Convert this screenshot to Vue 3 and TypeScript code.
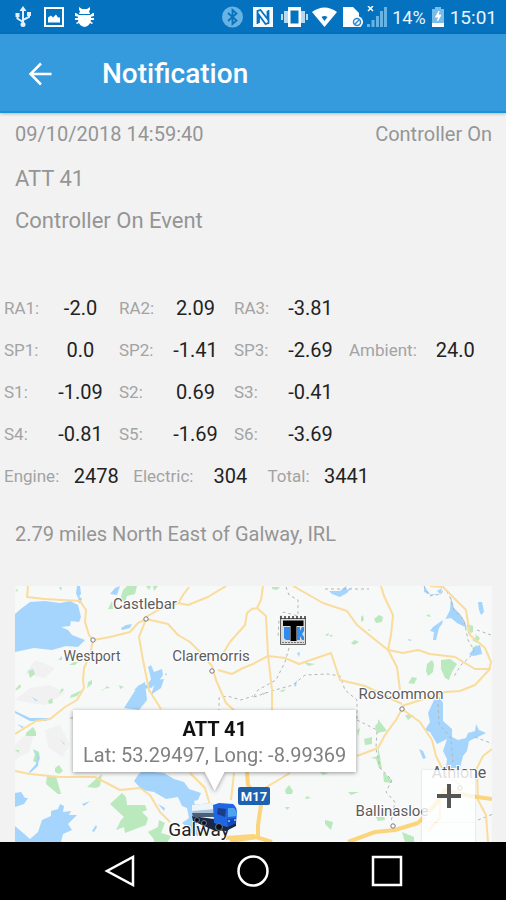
<script setup lang="ts">
interface Reading {
  label: string
  value: string
}

interface Place {
  name: string
  x: number
  y: number
  size: number
  dot: [number, number]
}

const readings: Reading[][] = [
  [
    { label: 'RA1:', value: '-2.0' },
    { label: 'RA2:', value: '2.09' },
    { label: 'RA3:', value: '-3.81' },
  ],
  [
    { label: 'SP1:', value: '0.0' },
    { label: 'SP2:', value: '-1.41' },
    { label: 'SP3:', value: '-2.69' },
    { label: 'Ambient:', value: '24.0' },
  ],
  [
    { label: 'S1:', value: '-1.09' },
    { label: 'S2:', value: '0.69' },
    { label: 'S3:', value: '-0.41' },
  ],
  [
    { label: 'S4:', value: '-0.81' },
    { label: 'S5:', value: '-1.69' },
    { label: 'S6:', value: '-3.69' },
  ],
]

const hours: Reading[] = [
  { label: 'Engine:', value: '2478' },
  { label: 'Electric:', value: '304' },
  { label: 'Total:', value: '3441' },
]

const places: Place[] = [
  { name: 'Castlebar', x: 145, y: 609, size: 15, dot: [146, 619] },
  { name: 'Westport', x: 92, y: 661, size: 14, dot: [93, 640] },
  { name: 'Claremorris', x: 211, y: 661, size: 15, dot: [212, 671] },
  { name: 'Roscommon', x: 401, y: 699, size: 15, dot: [402, 709] },
  { name: 'Athlone', x: 459, y: 778, size: 16, dot: [460, 788] },
  { name: 'Ballinasloe', x: 392, y: 816, size: 15, dot: [393, 826] },
]

const water: string[] = [
  'M15 614L22 608 30 602 45 601 60 603 70 601 78 605 81 617 79 622 71 621 70 626 61 627 68 630 72 635 85 640 78 647 66 646 52 650 34 648 15 652Z',
  'M77 586h3l1 8-3 4-2-5zM79 596l3 3-2 5-2-3z',
  'M110 594l5-6 5-2-3 9zM121 628l5-3 6-1-2 4-8 2z',
  'M134 690l5-5 8 0 4-6-3-12 3-2 3 7 8-3 1 6-5 7-7 6zM165 674l2-1-1 3z',
  'M124 708L138 686 145 682 147 700 139 710zM152 692l4-12 8-1-3 9-9 6z',
  'M15 711l15 7 20 0-4 3-16 0-15-8zM17 724l7 3-2 1zM31 696l7 5-2 0z',
  'M34 749l5 7-1 10-8 7-1-1 7-8 1-8z',
  'M15 793l6-1 4 6 3 0-4 6-9 3z',
  'M15 826l15 13 8-7 4-12 9-4 0-5 7-2 2-5 4 2-1 6 8-1-2 4 8 0-9 9 4 6-9 4-2 8H15z',
  'M82 804l8-3-6 5zM92 831l4-6 1 2-3 5z',
  'M138 775l4-4 22 2 10 6 10 3 5 7 12 4-3 7-4 1 2 9-3 9 8 10-3 7-8-3-3-6-5-4 7-5-2-10-5-2-4-9-12 2-12-7-12-2-8-9z',
  'M158 804l7 4-1 3z',
  'M329 591l11 0 6-5 1 4 5-3-5 6-7 4-8-3z',
  'M424 586l6 8 11 1-4-4 5-3-2 7-8 0-8-3z',
  'M446 618l4-8 1-13 3 11 6 6 4 6 3 8-10-5-6-5-6 1zM478 602l4 0 2 10-3 3-2-5z',
  'M433 627l10-7-1 4-3 4-3 12-3 0 1-8-4-1zM408 639l4 1-3 1z',
  'M473 648l7-3 2 9-9 2-4-2 4-4z',
  'M434 700l5-4 4 7 0 18 9 8 0 8 6 3 8-2 2-5 7-2 1-7 3 6 7 3-4 2-13 6-2 10-4 5-3 12h-14l1-9-4-8 4-12-10 5-7-12-5-2 5-8-2-9z',
  'M419 749l4 2 3 7-3 1zM294 685l3-5-1 7zM297 653l3-1-1 5z',
]

const greens: string[] = [
  'M120 600l3-10 4-4h10l-2 8-8 2-2 6zM108 609l4-8 1 8zM146 586h5l-2 4zM153 586h5l-4 5zM59 587l3 0-1 4z',
  'M15 590l3-1-1 3zM28 671l5-2 2 5-5 4zM69 665l5-3 4 0-3 3zM88 682l4-2 0 4-5 4zM58 660l4-4 0 4zM15 690l5-6 1 3-4 3z',
  'M71 695l11-5-5 6-7 2zM48 701l4-3 1 5-4 1zM62 688l2 2-5 4zM102 691l5-5 3 2-7 1zM119 685l5 2-4 2z',
  'M26 733l7-6 3 5 0 4-10 0zM60 739l5 5-1 1zM15 750l4 0 0 3zM33 749l6 3 1 7-3 4-4-2 2-6z',
  'M55 768l4-3 4 6-4 3-4-2zM47 776l9 0 5 18-3 0-12-10zM96 779l6-5-2 12-4 2-9-1z',
  'M110 804l12-11 4 4 1 8 18 0 2 5-5 2 6 6-2 7-8 3-13 5-1-6-8 3 5-10 3-3z',
  'M148 832l10-5 1-7 6 3-4 10 10 3-4 7h-12l-2-5z',
  'M272 587l8 0-3 3-5-1zM361 617l2-2 1 5-3 2zM374 619l5-4 4 2-1 5-6 1zM325 635l4-2-1 3zM329 635l4 0-2 2zM351 643l4-3 4 2-5 3zM368 629l3 1-2 1zM426 616l3-2 2 3z',
  'M427 664l5-4 2 4-1 8-5 4-2-5zM441 660l9-1 7 5-5 8-3 8-4-2-4-9zM409 682l3-5 5 1-3 6-6-1zM467 624l6 2 0 6-5 2zM475 634l5 4-3 5-5-3 4-3zM472 648l5-3 4 7-5 4z',
  'M303 662l12 2-6 2zM279 691l7-2-3 3zM262 693l6-1-5 3z',
  'M378 719l3 4 6 8-10 2-2-7 3-3zM364 739l8-2 0 7-7 1zM371 758l7-2 0-9 2 9 2 14-3-2-3-9zM383 772l9 8 0 3-8-1zM405 715l9 0-6 5zM357 730l3-2-2 9z',
  'M285 790l4-5 4 6-1 3-6 0zM305 798l2-2 4 2-5 1zM285 807l5 0-3 3zM325 820l8 2-2 8-6-6zM348 792l11 0-8 3zM320 772l9 1-6 2z',
  'M402 832l12 5 0 5h-9zM376 817l8-2 1 5-7 1z',
]

const roads: string[] = [
  'M28 586L27 597 45 599 80 601 86 610 85 622 89 635 93 640 90 655 84 668 83 680 84 688 77 700 65 707 50 719 36 721 15 734',
  'M93 640L110 637 130 632 138 623 146 619 168 624 178 635 190 642 200 652 212 666 216 680 226 703 236 712',
  'M146 619L139 637 143 660 149 690 161 709',
  'M146 617L160 609 178 603 188 605 208 597 226 586M179 602L183 595 189 587',
  'M253 608L247 613 245 625 230 642 219 660M218 670L232 674 243 668 253 664 268 656 285 658 299 664 331 653 340 680 365 686 402 704',
  'M263 586L261 600 257 608 253 609M257 608L266 616 268 655 272 690 272 710',
  'M293 586L323 603 347 611 357 625 368 634 388 650 403 653 418 650 430 654 455 657 475 669 491 669',
  'M381 586L384 596 393 615 391 635 388 650 397 667 400 690',
  'M430 586L443 587 466 610 470 635 485 648 491 662 489 670 475 685 460 691 445 692 430 697 402 706',
  'M402 709L396 720 385 735 378 748 357 756M290 773L265 788',
  'M402 709L420 722 432 740 436 756 444 772 460 785M492 749L483 756 477 768 478 800 486 815 488 842',
  'M234 773L231 800M190 773L205 788 210 805M15 771L30 774 60 777 95 777 120 790 140 788 150 795 160 812 170 822',
  'M428 831L440 818 440 800',
]

const motorways: string[] = [
  'M348 842L375 832 395 830 418 823 435 805 445 790 470 796 492 799',
  'M247 772L248 785 261 805 258 825 258 838M226 838L253 836 272 842M230 841L258 837',
]

const borders: string[] = [
  'M286 587L289 595 298 600 298 616 283 612 279 620 278 638 M289 648L285 662 276 680 258 690 253 698',
  'M254 697L275 690 293 685 305 675 328 674 340 676 345 690 357 700 357 720',
  'M325 589h44M424 586l5 10 12-2 3-7 6 10 4 13 10 10 4 20 6 10-4 7-9 8-8 13M477 630l14 5',
  'M357 720l20 10-1 18 4 20 12 12-6 12 9 10-4 20M438 704l1 20 12 14 2 26 M475 737l18 7M478 820l15-6M70 718h18M219 712v-14l8-2 14 4 12-4',
]
</script>

<template>
  <div class="screen">
    <div class="status">
      <div class="status-group left">
        <svg width="18" height="22" viewBox="0 0 18 22" fill="none" stroke="#dff0ff" stroke-width="2">
          <path d="M8 3v16M8 16L2.500 12.500V8M8 14l6-3V7" />
          <path d="M8 0L4.500 5h7zM0.500 7h4v4h-4zM12 6h4v4h-4z" fill="#dff0ff" stroke="none" />
          <circle cx="8" cy="18.500" r="2.500" fill="#dff0ff" stroke="none" />
        </svg>
        <svg width="20" height="20" viewBox="0 0 20 20">
          <path d="M0 0h20v20H0zM2 2v16h16V2z" fill="#fff" fill-rule="evenodd" />
          <path d="M4 15.500V10.500l3-2 2 2 3-3 2 3h2v5z" fill="#fff" />
        </svg>
        <svg width="19" height="20" viewBox="0 0 19 20" fill="#fff">
          <path d="M4 0l3 2h5l3-2v3l-1 1 1 3H4l1-3-1-1z" />
          <path d="M3 8h13v5q-1 6-6.500 7Q4 19 3 13z" />
          <path d="M0 6h1l3 2v2l-4-1zM19 6h-1l-3 2v2l4-1zM0 11h4v2H0zM15 11h4v2h-4zM1 16l3-2v2l-2 1zM18 16l-3-2v2l2 1z" />
        </svg>
      </div>
      <div class="status-group right">
        <svg width="24" height="22" viewBox="0 0 24 22">
          <circle cx="10.500" cy="11" r="10.500" fill="#67b3e3" />
          <path d="M6 7l8.500 7.500-4 3.500V4l4 3.500L6 15" fill="none" stroke="#0872bd" stroke-width="1.800" />
        </svg>
        <svg width="27" height="20" viewBox="0 0 27 20">
          <path d="M3 0h20v20H3z" fill="#f5faff" />
          <path d="M7.500 17V4l3-1 7 9V4M18.500 3v13l-3 1-6.500-9v8" fill="none" stroke="#0872bd" stroke-width="1.800" />
        </svg>
        <svg width="27" height="20" viewBox="0 0 27 20">
          <path d="M7 0h13v20H7zM9.500 3.500v13h8v-13z" fill="#fff" fill-rule="evenodd" />
          <path d="M3 4h4v12H3zM20 4h4v12h-4z" fill="#b5d9f3" />
          <path d="M0 7h2v6H0zM25 7h2v6h-2z" fill="#b5d9f3" />
        </svg>
        <svg width="27" height="20" viewBox="0 0 27 20">
          <path d="M0 5Q12.500-4 25 5L12.500 20z" fill="#fff" />
          <path d="M9.500 10q3-2 6 0l-3 4z" fill="#0872bd" />
        </svg>
        <svg width="20" height="20" viewBox="0 0 20 20">
          <path d="M0 0h10l6 6v14H0z" fill="#fff" />
          <circle cx="14" cy="15" r="6" fill="#fff" />
          <circle cx="14" cy="15" r="3.500" fill="none" stroke="#2d87cc" stroke-width="1.500" />
          <path d="M11.500 17.500l5-5" stroke="#2d87cc" stroke-width="1.500" />
        </svg>
        <svg width="21" height="22" viewBox="0 0 21 22">
          <path d="M1 0l5 5M6 0L1 5" stroke="#fff" stroke-width="1.500" />
          <path d="M0 18h3v3H0zM4.500 14h3v7h-3zM9 10h3v11H9zM13 5h3v16h-3zM17 1h3v20h-3z" fill="#67b3e3" />
        </svg>
        <span class="battery-text">14%</span>
        <svg width="16" height="20" viewBox="0 0 16 20">
          <path d="M5 0h6v2h3v16H2V2h3z" fill="#79bce8" />
          <path d="M2 16h12v4H2z" fill="#fff" />
          <path d="M9 4l-3.500 6h3l-1 4 3.500-6H8z" fill="#fff" stroke="#fff" />
        </svg>
        <span class="clock">15:01</span>
      </div>
    </div>

    <header class="appbar">
      <button class="back" type="button" aria-label="Back">
        <svg width="24" height="24" viewBox="0 0 24 24" fill="none" stroke="#fff" stroke-width="2.500">
          <path d="M23.500 12H2.500M13 1.500L2.500 12 13 22.500" />
        </svg>
      </button>
      <h1>Notification</h1>
    </header>

    <main>
      <div class="summary">
        <div class="summary-top">
          <span>09/10/2018 14:59:40</span>
          <span>Controller On</span>
        </div>
        <p class="large">ATT 41</p>
        <p class="large">Controller On Event</p>
      </div>

      <div class="readings">
        <dl v-for="(row, i) in readings" :key="i">
          <template v-for="item in row" :key="item.label">
            <dt>{{ item.label }}</dt>
            <dd>{{ item.value }}</dd>
          </template>
        </dl>
        <dl class="hours">
          <template v-for="item in hours" :key="item.label">
            <dt>{{ item.label }}</dt>
            <dd>{{ item.value }}</dd>
          </template>
        </dl>
      </div>

      <p class="location">2.79 miles North East of Galway, IRL</p>

      <section class="map" aria-label="Map">
        <svg class="map-canvas" viewBox="15 586 477 256" preserveAspectRatio="xMidYMin slice">
          <path class="land" d="M15 586h477v256H15z" />
          <path class="hills" d="M15 700l15-12 20-3 15 8-20 12-15-2zM15 745l12-12 6 4-4 15-14 8zM45 730l15-5 10 20-8 12-14-10zM35 660l20 8-10 10-20-4z" />
          <path v-for="d in greens" :key="d" class="green" :d="d" />
          <path v-for="d in water" :key="d" class="water" :d="d" />
          <path v-for="d in borders" :key="d" class="border" :d="d" />
          <path v-for="d in roads" :key="d" class="road" :d="d" />
          <path v-for="d in motorways" :key="d" class="motorway" :d="d" />

          <g v-for="p in places" :key="p.name">
            <circle class="town" :cx="p.dot[0]" :cy="p.dot[1]" r="2.200" />
            <text class="place" :x="p.x" :y="p.y" :font-size="p.size">{{ p.name }}</text>
          </g>

          <g>
            <rect x="238" y="787" width="32" height="18" rx="2" fill="#1d62ae" />
            <text class="shield" x="254" y="801" font-size="13">M17</text>
          </g>

          <g>
            <path d="M280.500 618.500h25v26h-25z" fill="#dcdcdc" stroke="#666" />
            <path d="M281 616v3M285 616v3M289 616v3M293 616v3M297 616v3M301 616v3M305 616v3" stroke="#333" stroke-width="1.500" />
            <path d="M284 627h6v13h-4l-2-2zM297 627h3v4l2-4h2v4l-2 3 2 3v3h-2l-2-4v4h-3z" fill="#2e8cec" />
            <path d="M283 620.500h20.500v5.500h-7v15h-6v-15H283z" fill="#000" />
            <path d="M282 642.500h22" stroke="#777" stroke-dasharray="2 1" />
          </g>

          <text class="place city" x="199" y="836" font-size="19">Galway</text>

          <g>
            <path d="M192 816l1 5 20 9 13 1 10-5v-4z" fill="#182846" />
            <path d="M192 805l19-2 5 3v9l-22 2z" fill="#aac2d8" />
            <path d="M192 805l19-2 5 3v3l-24 2z" fill="#eef5fa" />
            <path d="M192 813l23 0v4l-22 0z" fill="#4c5f78" />
            <path d="M213 805l6-2 14 1q4 3 4 9l-1 10-9 4-13-4z" fill="#1f66e2" />
            <path d="M218 808l8 1-1 8-8-3z" fill="#1c3d88" />
            <path d="M228 808h6q3 3 3 8l-9 1z" fill="#4da3ee" />
            <path d="M227 819l9-1v5l-8 3z" fill="#0f49bd" />
            <path d="M228 821l2 0M234 820l2 0" stroke="#fff" />
            <g fill="#111" stroke="#68778d">
              <circle cx="197" cy="820" r="2.500" />
              <circle cx="204" cy="823" r="2.500" />
              <circle cx="219" cy="827" r="3.500" />
            </g>
          </g>
        </svg>

        <div class="popup">
          <strong>ATT 41</strong>
          <span>Lat: 53.29497, Long: -8.99369</span>
        </div>

        <div class="zoom">
          <button type="button" aria-label="Zoom in">
            <svg width="24" height="24" viewBox="0 0 24 24" stroke="#555" stroke-width="4">
              <path d="M12 0v24M0 12h24" />
            </svg>
          </button>
          <button type="button" aria-label="Zoom out">
            <svg width="24" height="24" viewBox="0 0 24 24" stroke="#555" stroke-width="4">
              <path d="M0 12h24" />
            </svg>
          </button>
        </div>
      </section>
    </main>

    <nav class="navbar">
      <button type="button" aria-label="Back">
        <svg width="32" height="32" viewBox="0 0 32 32"><path d="M29 2v28L3 16z" /></svg>
      </button>
      <button type="button" aria-label="Home">
        <svg width="32" height="32" viewBox="0 0 32 32"><circle cx="16" cy="16" r="14.500" /></svg>
      </button>
      <button type="button" aria-label="Recent apps">
        <svg width="32" height="32" viewBox="0 0 32 32"><path d="M2 2h28v28H2z" /></svg>
      </button>
    </nav>
  </div>
</template>

<style>
body {
  margin: 0;
  background: #f2f2f2;
}
</style>

<style scoped>
.screen {
  display: flex;
  flex-direction: column;
  height: 100vh;
  overflow: hidden;
  background: #f2f2f2;
  color: #959595;
  font-family: Roboto, "Liberation Sans", sans-serif;
}

svg {
  display: block;
}

p,
h1,
dl,
dd {
  margin: 0;
}

button {
  display: flex;
  align-items: center;
  justify-content: center;
  padding: 0;
  border: 0;
  background: transparent;
}

.status {
  display: flex;
  flex: none;
  align-items: center;
  justify-content: space-between;
  height: 34px;
  padding: 0 9px 0 15px;
  background: #0572bf;
  color: #eaf5ff;
}

.status-group {
  display: flex;
  align-items: center;
}

.left {
  gap: 11px;
}

.right {
  gap: 4px;
}

.battery-text {
  font-size: 18px;
}

.clock {
  font-size: 19px;
}

.appbar {
  display: flex;
  flex: none;
  align-items: center;
  gap: 50px;
  box-sizing: border-box;
  height: 79px;
  padding: 2px 28px 0;
  border-bottom: 2px solid #1a92da;
  background: #369bdd;
  box-shadow: 0 1px 3px rgba(0, 0, 0, 0.25);
}

h1 {
  color: #fff;
  font-size: 28px;
  font-weight: 500;
}

main {
  display: flex;
  flex: 1;
  flex-direction: column;
  min-height: 0;
}

.summary {
  padding: 0 14px 0 15px;
}

.summary-top {
  display: flex;
  justify-content: space-between;
  margin-bottom: 3px;
  font-size: 20px;
  line-height: 42px;
}

.large {
  font-size: 22px;
  line-height: 42px;
}

.readings {
  padding: 45px 4px 0;
}

.readings dl {
  display: flex;
  line-height: 42px;
}

dt {
  min-width: 38px;
  color: #a3a3a3;
  font-size: 17px;
}

dd {
  width: 77px;
  color: #222;
  font-size: 20px;
  text-align: center;
}

.hours dd {
  width: 74px;
}

.location {
  padding: 16px 15px 31px;
  font-size: 20px;
  line-height: 42px;
}

.map {
  position: relative;
  flex: 1;
  min-height: 0;
  margin: 0 14px 0 15px;
  overflow: hidden;
  background: #f7f8f8;
}

.map-canvas {
  width: 100%;
  height: 100%;
}

.land {
  fill: #f7f8f8;
}

.hills {
  fill: #f1f1f1;
}

.water {
  fill: #a5d5fc;
}

.green {
  fill: #b9e9bd;
}

.road,
.motorway,
.border {
  fill: none;
  stroke-linejoin: round;
}

.road {
  stroke: #fadc9c;
  stroke-width: 2;
}

.motorway {
  stroke: #fad57c;
  stroke-width: 4;
}

.border {
  stroke: #b5b5b5;
  stroke-dasharray: 3 3;
}

.town {
  fill: #fff;
  stroke: #777;
  stroke-width: 1;
}

.place {
  fill: #5c5c5c;
  stroke: #fff;
  stroke-width: 2;
  paint-order: stroke;
  text-anchor: middle;
}

.city {
  fill: #222;
}

.shield {
  fill: #fff;
  font-weight: 700;
  text-anchor: middle;
}

.popup {
  position: absolute;
  top: 124px;
  left: 58px;
  display: flex;
  flex-direction: column;
  align-items: center;
  padding: 6px 10px 4px;
  background: #fff;
  filter: drop-shadow(0 1px 2px rgba(0, 0, 0, 0.4));
  color: #808080;
  font-size: 20px;
  line-height: 26px;
  white-space: nowrap;
}

.popup::after {
  position: absolute;
  top: 100%;
  left: 50%;
  width: 20px;
  height: 19px;
  margin-left: -10px;
  background: #fff;
  clip-path: polygon(0 0, 100% 0, 50% 100%);
  content: "";
}

.popup strong {
  color: #111;
  font-weight: 700;
}

.zoom {
  position: absolute;
  top: 184px;
  right: 17px;
  display: flex;
  flex-direction: column;
  gap: 1px;
  background: rgba(255, 255, 255, 0.3);
  box-shadow: 0 0 2px rgba(0, 0, 0, 0.15);
}

.zoom button {
  width: 53px;
  height: 52px;
  background: rgba(255, 255, 255, 0.7);
}

.navbar {
  display: grid;
  flex: none;
  grid-template-columns: repeat(3, 1fr);
  height: 58px;
  padding: 0 52px 0 53px;
  background: #000;
}

.navbar svg {
  fill: none;
  stroke: #fff;
  stroke-width: 2.500;
}
</style>
